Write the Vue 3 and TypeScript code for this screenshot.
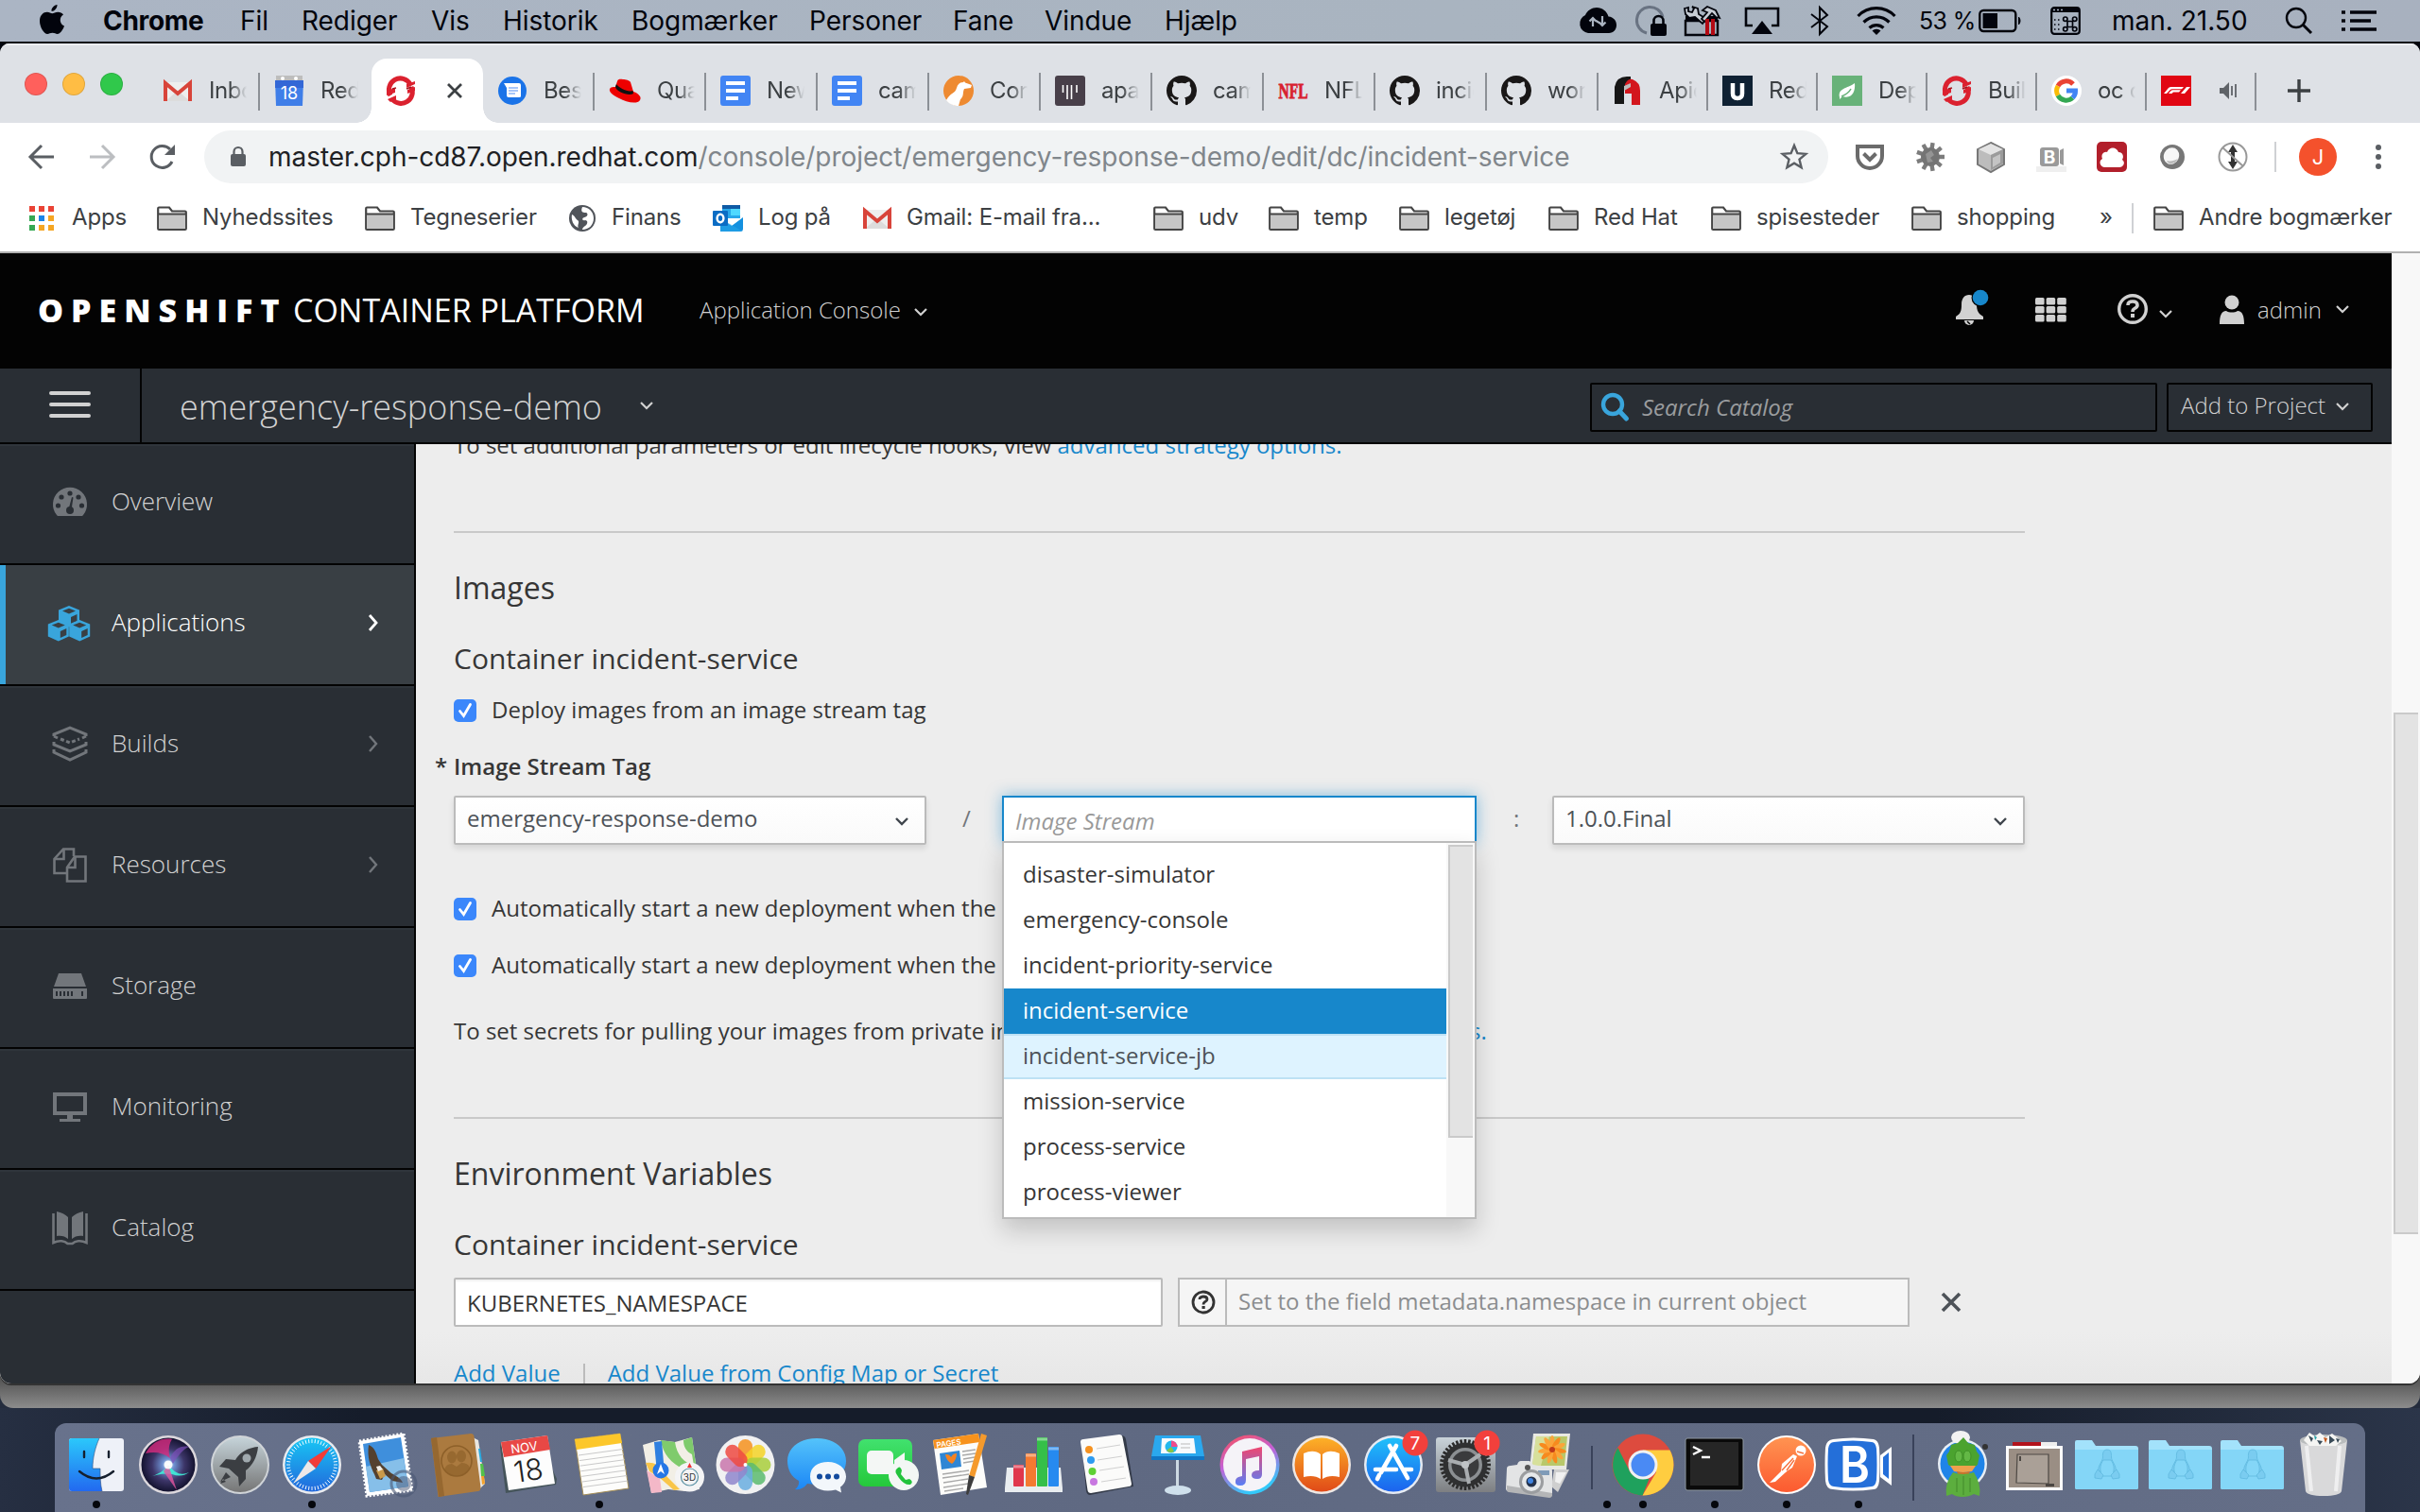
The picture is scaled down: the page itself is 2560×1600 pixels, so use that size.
<script setup lang="ts">
import { h } from 'vue'

interface Glyph { w: number; h: number; body: string }

const g = (w: number, hh: number, body: string): Glyph => ({ w, h: hh, body })

const octocat = '<path transform="scale(2)" fill="#191717" d="M8 0C3.58 0 0 3.58 0 8c0 3.54 2.29 6.53 5.47 7.59.4.07.55-.17.55-.38 0-.19-.01-.82-.01-1.49-2.01.37-2.53-.49-2.69-.94-.09-.23-.48-.94-.82-1.13-.28-.15-.68-.52-.01-.53.63-.01 1.08.58 1.23.82.72 1.21 1.87.87 2.33.66.07-.52.28-.87.51-1.07-1.78-.2-3.64-.89-3.64-3.95 0-.87.31-1.59.82-2.15-.08-.2-.36-1.02.08-2.12 0 0 .67-.21 2.2.82.64-.18 1.32-.27 2-.27s1.36.09 2 .27c1.53-1.04 2.2-.82 2.2-.82.44 1.1.16 1.92.08 2.12.51.56.82 1.27.82 2.15 0 3.07-1.87 3.75-3.65 3.95.29.25.54.73.54 1.48 0 1.07-.01 1.93-.01 2.2 0 .21.15.46.55.38A8.01 8.01 0 0 0 16 8c0-4.42-3.58-8-8-8z"/>'
const openshift = '<g fill="none" stroke="#db212f" stroke-width="5"><path d="M5 21A12 12 0 0 1 26 9"/><path d="M27 12A12 12 0 0 1 7 25"/></g><path d="M1 16l9-3v5l-9 3zM22 13l9-4v-3l-9 3zM2 25l9-4v4l-6 3zM23 19l8-3v-4l-8 3z" fill="#db212f"/><path d="M7 14l4-1M22 14l5-2" stroke="#a5161f" stroke-width="1.5"/>'
const gmail = '<rect x="3" y="7" width="26" height="20" rx="1" fill="#eee"/><path d="M3 27l13-11 13 11z" fill="#dcdcdc"/><path d="M3 27V8l13 11L29 8v19" fill="none" stroke="#d8443a" stroke-width="4"/>'
const doc = '<rect width="32" height="32" rx="3" fill="#4285f4"/><path d="M6 6h20v4H6zM6 14h20v4H6zM6 22h13v4H6z" fill="#fff"/>'
const chevDown = (c: string, s = 2.2) => `<path d="M2 2l6 6 6-6" fill="none" stroke="${c}" stroke-width="${s}"/>`
const penguin = '<g fill="#7accf0" stroke="#5fb9de" stroke-width=".8"><path d="M34 28c-4 0-5 4-4.500 8 0 4-5 8-5 15h19c0-7-5-11-5-15 0-4 0-8-4.500-8z"/><path d="M30 39c-4 5-4 12-1 17h10c3-5 3-12-1-17z" fill="#84d6f7"/><path d="M24 49l6 6-2 4-7-1v-4z"/><path d="M44 49l-6 6 2 4 7-1v-4z"/></g>'
const folderArt = (x: number) => `<g transform="translate(${x} 0)"><path d="M0 20q0-2 2-2h16l4 6h42q3 0 3 3v41q0 2-2 2H2q-2 0-2-2z" fill="#a3e2fb"/><path d="M0 28h67v40q0 2-2 2H2q-2 0-2-2z" fill="#84d6f7"/>${penguin}</g>`
const badge = (n: string) => `<circle cx="65" cy="21" r="13.500" fill="#f2403c"/><text x="65" y="28" text-anchor="middle" font-size="19" fill="#fff">${n}</text>`
const petals = ['#f6921e', '#f5d327', '#a9cf3c', '#5cbb6e', '#6aaee0', '#8f86cc', '#c977ad', '#ee4a42']
  .map((c, i) => `<rect x="33" y="17" width="15" height="27" rx="7.500" fill="${c}" opacity=".85" transform="rotate(${i * 45} 40.500 44)"/>`).join('')
const ticks = (n: number, cx: number, cy: number, r1: number, r2: number, c: string, w: number) =>
  Array.from({ length: n }, (_, i) => `<path d="M${cx} ${cy - r1}V${cy - r2}" stroke="${c}" stroke-width="${w}" transform="rotate(${(i * 360) / n} ${cx} ${cy})"/>`).join('')
const flower = Array.from({ length: 11 }, (_, i) => `<ellipse cx="58" cy="21" rx="2.600" ry="8" fill="${i % 2 ? '#f78a1e' : '#fba53a'}" transform="rotate(${(i * 360) / 11} 58 28)"/>`).join('')

const glyphs: Record<string, Glyph> = {
  // menu bar
  apple: g(28, 34, '<path d="M19.500 1c.3 3-2.600 7-6 6.800C13 4.800 16.200 1.400 19.500 1zM26 11.500c-4.800 3-4 10 1 12-1.300 3.800-4.300 8.500-7.300 8.500-2 0-2.700-1.200-5.200-1.200S11 32 9.200 32C5.500 32 1 24.500 1 18.200 1 12 5 8.800 8.800 8.800c2.300 0 4 1.400 5.500 1.400 1.400 0 3.300-1.500 6.200-1.500 2 0 4.200 1 5.500 2.800z" fill="#02040c"/>'),
  cloud: g(42, 28, '<path d="M11 27a10 10 0 0 1-3-19C10 3 15 0 20 0c6 0 11 4 12.500 9.500C38 10 41 14 41 18.500 41 23 38 27 33 27z" fill="#02040c"/><path d="M16 20v-8M12.500 14.500L16 11l3.500 3.500M26 9v9M22.500 15.500L26 19l3.500-3.500M16 12l10 6" stroke="#aab4c1" stroke-width="2.200" fill="none"/>'),
  vpn: g(36, 34, '<path d="M14 30A14 14 0 1 1 31 13" fill="none" stroke="#697382" stroke-width="3"/><rect x="18" y="20" width="17" height="13" rx="2" fill="#02040c"/><path d="M21.500 21v-4a5 5 0 0 1 10 0v4" fill="none" stroke="#02040c" stroke-width="2.600"/>'),
  toolbox: g(40, 34, '<path d="M3 17h34v15H3z" fill="#a4adb9" stroke="#02040c" stroke-width="2.400"/><path d="M3 12h34v6H3z" fill="#02040c"/><path d="M2 4l4-1v4l4 1 2-4-2-2 6 2 1 6 8 5-4 5-8-7-6 1-4-4z" fill="#c7cdd5" stroke="#02040c" stroke-width="1.800"/><path d="M21 6l5-4 9 4 4 8-4-1-4-4-8 9-3-3 6-7z" fill="#c7cdd5" stroke="#02040c" stroke-width="1.800"/><path d="M26 15v17M32 15v17" stroke="#b20912" stroke-width="4"/>'),
  airplay: g(38, 30, '<path d="M9 20H2V2h34v18h-7" fill="none" stroke="#02040c" stroke-width="2.600"/><path d="M8 29L19 15l11 14z" fill="#02040c"/>'),
  bluetooth: g(20, 32, '<path d="M1 9l17 13-8 8V2l8 8L1 23" fill="none" stroke="#02040c" stroke-width="2"/>'),
  wifi: g(42, 30, '<g fill="none" stroke="#02040c" stroke-width="3.200"><path d="M1.500 10a27 27 0 0 1 39 0"/><path d="M7.500 16.500a19 19 0 0 1 27 0"/><path d="M13.500 22.500a11 11 0 0 1 15 0"/></g><path d="M21 30l-4.500-4.500a6.500 6.500 0 0 1 9 0z" fill="#02040c"/>'),
  battery: g(46, 26, '<rect x="1.300" y="2" width="38" height="22" rx="4" fill="none" stroke="#02040c" stroke-width="2.400"/><rect x="4.500" y="5" width="15.500" height="16" fill="#02040c"/><path d="M42.500 9a6 6 0 0 1 0 8z" stroke="#02040c" fill="#02040c"/>'),
  input: g(32, 30, '<rect x="1.200" y="1.200" width="29.600" height="27.600" rx="3" fill="none" stroke="#02040c" stroke-width="2.200"/><path d="M2 2h28v4H2z" fill="#02040c"/><path d="M3 3.500h2M7 3.500h2M11 3.500h2" stroke="#aab4c1" stroke-width="1.600"/><path d="M4 14h1.500M8 14h1.500M4 19h1.500M8 19h1.500M4 24h1.500M8 24h1.500" stroke="#02040c" stroke-width="1.600"/><g fill="none" stroke="#02040c" stroke-width="1.700"><path d="M18 15.500h5.500v6H18z"/><circle cx="15.800" cy="13.200" r="2.200"/><circle cx="25.700" cy="13.200" r="2.200"/><circle cx="15.800" cy="23.800" r="2.200"/><circle cx="25.700" cy="23.800" r="2.200"/></g>'),
  spotlight: g(30, 30, '<circle cx="12" cy="12" r="10" fill="none" stroke="#02040c" stroke-width="2.400"/><path d="M19 19l9 9" stroke="#02040c" stroke-width="3"/>'),
  list: g(38, 24, '<path d="M0 3h4M9 3h28M0 12h4M9 12h22M0 21h4M9 21h28" stroke="#02040c" stroke-width="3.600"/>'),
  // favicons
  gmail: g(32, 32, gmail),
  gcal: g(32, 32, '<path d="M2 0h28v6H2z" fill="#bdbdbd"/><circle cx="9" cy="3" r="2" fill="#fff"/><circle cx="23" cy="3" r="2" fill="#fff"/><path d="M1 5h30l-1 27H2z" fill="#3f7ee8"/><path d="M1 5h30v8H1z" fill="#3367d6"/><text x="16" y="25" font-size="18" text-anchor="middle" fill="#fff">18</text>'),
  openshift: g(32, 32, openshift),
  messages: g(32, 32, '<circle cx="16" cy="16" r="15" fill="#1a73e8"/><path d="M7 8h16q2 0 2 2v12q0 1-2 1H12q-2 0-2-2V13z" fill="#fff"/><path d="M12 13h10M12 16h10M12 19h7" stroke="#8ab4f8" stroke-width="1.500"/>'),
  redhat: g(34, 32, '<path d="M9 6c1-3 4-2 6-2 3 0 7 1 8 3l3 10c6 2 9 6 7 9-3 5-15 2-22-2C4 21 0 17 1 14c1-2 4-2 6-2z" fill="#ee0000"/><path d="M7 12c1 5 14 10 19 7l-.5-3c-5 2-15-3-17.500-7z" fill="#111"/>'),
  doc: g(32, 32, doc),
  camel: g(32, 32, '<circle cx="16" cy="16" r="16" fill="#ee8a31"/><path d="M3 26C8 17 12 20 14 13c1-4 4-6 7-6l1-1 1 1.500 7 2.500-1 3-7 1c-2 4 0 8-4 11l-2 7c-5 0-10-2-13-6z" fill="#fff"/>'),
  lines: g(32, 32, '<rect width="32" height="32" rx="3" fill="#483f49"/><path d="M8.500 10v8M13 10v15M17.500 10v15M23 10v8" stroke="#fff" stroke-width="1.600"/>'),
  github: g(32, 32, octocat),
  nfl: g(32, 32, '<text x="16" y="24" font-family="Liberation Serif, serif" font-weight="700" font-size="23" text-anchor="middle" textLength="31" lengthAdjust="spacingAndGlyphs" fill="#d8202f" stroke="#d8202f" stroke-width=".8">NFL</text>'),
  api: g(32, 32, '<path d="M2 30V12Q4 1 15 1h4v8l-7 6v15z" fill="#161616"/><path d="M13 9q3-6 8-5 8 3 8 12v15h-9V19h-7z" fill="#d3161d"/><path d="M12 11l7-3v4l-7 4z" fill="#bbb"/>'),
  udacity: g(32, 32, '<rect width="32" height="32" fill="#0f2133"/><path d="M11 8v11q0 5 5 5t5-5V8" fill="none" stroke="#fff" stroke-width="4.500"/>'),
  leaf: g(32, 32, '<rect width="32" height="32" fill="#68b279"/><path d="M8 23C6 13 16 14 24 8c1 9-3 17-13 14l-3 3z" fill="#fff"/><path d="M10 22c5-2 8-4 10-8" stroke="#68b279" stroke-width="1.500" fill="none"/>'),
  google: g(32, 32, '<circle cx="16" cy="16" r="16" fill="#fff"/><g fill="none" stroke-width="5"><path d="M7 11a10 10 0 0 1 16-2" stroke="#ea4335"/><path d="M7 21a10 10 0 0 1 0-10" stroke="#fbbc05"/><path d="M22.500 23.500A10 10 0 0 1 7 21" stroke="#34a853"/><path d="M16 16h9.500a10 10 0 0 1-3 7.500" stroke="#4285f4"/></g>'),
  f1: g(32, 32, '<rect width="32" height="32" fill="#e10613"/><path d="M3 19l5-6q1-1 3-1h13l-2 2.300H12q-1.500 0-2.500 1L6 19zM8 19l2.500-3q.8-.8 2-.8H21L19 17.500h-6L11.500 19zM21 19l6-7h4l-6 7z" fill="#fff"/>'),
  speaker: g(20, 20, '<path d="M1 7h4l6-6v18l-6-6H1z" fill="#5f6368"/><path d="M14 5v10M18 3v14" stroke="#5f6368" stroke-width="1.800"/>'),
  closeTab: g(20, 20, '<path d="M3 3l14 14M17 3L3 17" stroke="#3c4043" stroke-width="2.800"/>'),
  plus: g(26, 26, '<path d="M13 1v24M1 13h24" stroke="#3c4043" stroke-width="3.400"/>'),
  // toolbar
  back: g(28, 28, '<path d="M27 14H3M14 2L2 14l12 12" fill="none" stroke="#5a5e63" stroke-width="3"/>'),
  forward: g(28, 28, '<path d="M1 14h24M14 2l12 12-12 12" fill="none" stroke="#bcbec1" stroke-width="3"/>'),
  reload: g(30, 28, '<path d="M25 19A11.500 11.500 0 1 1 23 6" fill="none" stroke="#5a5e63" stroke-width="3"/><path d="M28 1v11H17z" fill="#5a5e63"/>'),
  lock: g(18, 24, '<rect x="1" y="9" width="16" height="13" rx="2" fill="#5a5e63"/><path d="M4.500 10V6.500a4.500 4.500 0 0 1 9 0V10" fill="none" stroke="#5a5e63" stroke-width="2.200"/>'),
  star: g(30, 30, '<path d="M15 3l3.400 8.200 8.900.7-6.800 5.800 2.100 8.600L15 21.700l-7.600 4.600 2.100-8.600L2.700 11.900l8.900-.7z" fill="none" stroke="#5a5e63" stroke-width="2.400"/>'),
  pocket: g(32, 32, '<path d="M3 5h26v10a13 13 0 0 1-26 0z" fill="none" stroke="#6b6b6b" stroke-width="4"/><path d="M9.500 12.500l6.500 6.500 6.500-6.500" fill="none" stroke="#6b6b6b" stroke-width="4"/>'),
  gear: g(32, 32, '<g transform="rotate(10 16 16)">' + ticks(9, 16, 16, 8, 15, '#7c7c7c', 4.4) + '</g><circle cx="16" cy="16" r="10" fill="#747474"/><path d="M11 13l6-4 3 5-4 3 3 4-6 1z" fill="#949494"/>'),
  cube: g(32, 32, '<path d="M16 1l14 7v16l-14 8-14-8V8z" fill="#bcbcbc" stroke="#777" stroke-width="2"/><path d="M3 8l13 6 13-6-13-6z" fill="#e3e3e3"/><path d="M16 14v16l13-7V8z" fill="#9b9b9b"/><path d="M18 17l8-4v9l-8 5z" fill="#c4c4c4"/>'),
  bj: g(32, 32, '<path d="M0 26h32v6H0z" fill="#efefef"/><rect x="4" y="6" width="20" height="20" rx="3" fill="#9a9a9a"/><path d="M25 9l4-2v18l-4-2z" fill="#9a9a9a"/><text x="14" y="23" font-size="19" font-weight="700" text-anchor="middle" fill="#fff">B</text>'),
  cloudRed: g(32, 32, '<rect width="32" height="32" rx="5" fill="#b21f2b"/><path d="M8 27c-5-1-6-7-2-9-2-5 2-8 5-7 2-6 10-6 12 0 5 0 6 5 4 8 4 3 1 8-3 8z" fill="#fff"/>'),
  ring: g(32, 32, '<circle cx="16" cy="16" r="13" fill="#777"/><ellipse cx="15" cy="15" rx="8" ry="9" fill="#f7f7f7" transform="rotate(25 15 15)"/><path d="M10 20c2 5 9 4 12-2-4 2-8 3-12 2z" fill="#bbb"/>'),
  scroll: g(32, 32, '<circle cx="16" cy="16" r="14.500" fill="#fff" stroke="#999" stroke-width="2"/><path d="M16 3l5 8h-3v10h3l-5 8-5-8h3V11h-3z" fill="#333"/><path d="M5 6l22 20" stroke="#999" stroke-width="2"/>'),
  kebab: g(8, 28, '<g fill="#5a5e63"><circle cx="4" cy="4" r="3"/><circle cx="4" cy="14" r="3"/><circle cx="4" cy="24" r="3"/></g>'),
  // bookmarks
  apps: g(32, 28, [['#ea4335', '#ea4335', '#ea4335'], ['#34a853', '#1a84e8', '#f5a623'], ['#34a853', '#f5a623', '#f5a623']]
    .map((r, y) => r.map((c, x) => `<rect x="${x * 10}" y="${1 + y * 10}" width="6" height="6" fill="${c}"/>`).join('')).join('')),
  folder: g(32, 28, '<path d="M1.200 25V3.500q0-1 1-1H13l3 4h13.800q1 0 1 1V25q0 1-1 1H2.200q-1 0-1-1z" fill="#fff" stroke="#454545" stroke-width="2.200"/><path d="M2.200 9.500h27.600V25H2.200z" fill="#c6c6c6"/><path d="M1 9.500h30" stroke="#454545" stroke-width="2"/>'),
  globe: g(32, 28, '<circle cx="14" cy="14" r="14" fill="#50545a"/><path d="M14 2c-2 5 0 6 4 6 3 1 1 5-2 5-3 1-2 4 1 3 3 0 3 4 0 6-2 1-3 3-3 4C21 26 26 21 26 14S21 2 14 2zM3 10c3 1 4 5 6 6 3 2-1 5 1 8C4 22 2 15 3 10z" fill="#fff"/>'),
  outlook: g(32, 28, '<path d="M10 0h19v14H10z" fill="#28a8ea"/><path d="M10 0h19v4H10z" fill="#0f5ba5"/><path d="M19 4h10v7H19z" fill="#50d9ff"/><path d="M8 14l12 8 12-9v12q0 3-3 3H8z" fill="#1490df"/><path d="M8 14l24 14H8z" fill="#28a8ea" opacity=".5"/><rect y="6" width="16" height="16" rx="1" fill="#0a6cc4"/><ellipse cx="8" cy="14" rx="3.400" ry="4.200" fill="none" stroke="#fff" stroke-width="2.400"/>'),
  gmailSmall: g(32, 28, `<g transform="translate(-2 -2)">${gmail}</g>`),
  // console header
  chevLight: g(16, 11, chevDown('#d1d1d1')),
  chevDark: g(16, 11, chevDown('#3f454c', 2.4)),
  chevRight: g(14, 22, '<path d="M3 3l7 8-7 8" fill="none" stroke="#fff" stroke-width="2.800"/>'),
  chevRightDim: g(14, 22, '<path d="M3 3l7 8-7 8" fill="none" stroke="#72767b" stroke-width="2.400"/>'),
  bell: g(36, 40, '<path d="M14 6c5 0 8 4 8 10 0 7 2 10 7 13v3H0v-3c5-3 6-6 6-13 0-6 3-10 8-10z" fill="#d1d1d1"/><path d="M9 33a5 5 0 0 0 10 0z" fill="#d1d1d1"/><path d="M12 34l3 3" stroke="#030303" stroke-width="1.500"/><circle cx="26" cy="9" r="9.500" fill="#030303"/><circle cx="26" cy="9" r="8.300" fill="#1787cb"/>'),
  grid: g(34, 26, [0, 1, 2].map(y => [0, 1, 2].map(x => `<rect x="${x * 11.6}" y="${y * 9}" width="9.600" height="7.400" rx="1.500" fill="#d1d1d1"/>`).join('')).join('')),
  help: g(34, 34, '<circle cx="17" cy="17" r="14.300" fill="none" stroke="#d1d1d1" stroke-width="3.400"/><path d="M12 13q0-4 5-4t5 4q0 2-3 3.500-2 1-2 3.500" fill="none" stroke="#d1d1d1" stroke-width="3.600"/><rect x="15" y="22" width="4" height="4" fill="#d1d1d1"/>'),
  helpDark: g(26, 26, '<circle cx="13" cy="13" r="11" fill="none" stroke="#333" stroke-width="2.800"/><path d="M9 10q0-3 4-3t4 3q0 1.500-2.500 2.700-1.500 1-1.500 2.800" fill="none" stroke="#333" stroke-width="2.800"/><rect x="11.500" y="17" width="3.200" height="3" fill="#333"/>'),
  user: g(26, 32, '<circle cx="13" cy="8" r="7.500" fill="#d1d1d1"/><path d="M0 31c0-9 2-14 7-14 3 2 9 2 12 0 5 0 7 5 7 14z" fill="#d1d1d1"/>'),
  burger: g(44, 30, '<path d="M2 3h40M2 15h40M2 27h40" stroke="#d1d1d1" stroke-width="4" stroke-linecap="round"/>'),
  search: g(32, 32, '<circle cx="13" cy="13" r="10" fill="none" stroke="#39a5dc" stroke-width="4.400"/><path d="M20 20l7.500 8" stroke="#39a5dc" stroke-width="5" stroke-linecap="round"/>'),
  remove: g(22, 22, '<path d="M2 2l18 18M20 2L2 20" stroke="#4d5258" stroke-width="3.600"/>'),
  check: g(24, 24, '<rect width="24" height="24" rx="5" fill="#3b87fb"/><path d="M6.500 12.500l4 5 7-12" fill="none" stroke="#fff" stroke-width="2.800" stroke-linecap="round"/>'),
  // console sidebar
  gauge: g(44, 44, '<path d="M8 36A18 18 0 1 1 36 36l-1 1H9z" fill="#72767b"/><g fill="#292e34"><circle cx="22" cy="13" r="2.600"/><circle cx="13" cy="17" r="2.600"/><circle cx="31" cy="17" r="2.600"/><circle cx="9.500" cy="26" r="2.600"/><circle cx="34.500" cy="26" r="2.600"/><circle cx="22" cy="31" r="4"/><path d="M20.500 30L24 17l1.500.5-2 13z"/></g>'),
  cubes: g(44, 44, [[21, 4], [9.800, 19], [32.200, 19]].map(([x, y]) =>
    `<g transform="translate(${x} ${y})"><path d="M0 0l11 4.500v13L0 22.500l-11-5v-13z" fill="#39a5dc"/><path d="M0 2.800l7 2.800L0 8.600l-7-3zM2 12l6.500-3v7L2 19z" fill="#393f44"/></g>`).join('')),
  layers: g(44, 44, '<g fill="none" stroke="#72767b" stroke-width="3"><path d="M5 14v-2l17-7 17 7v2M5 14l4 2M39 14l-4 2"/><path d="M12 17l10 4 10-4" stroke-dasharray="4 2.500"/><path d="M5 20v3l17 7 17-7v-3"/><path d="M5 28v3l17 8 17-8v-3"/></g>'),
  copy: g(44, 44, '<g fill="none" stroke="#72767b" stroke-width="2.600"><path d="M18 31H5.500V16L15 5.500h11V13"/><path d="M15.500 6v10H6"/><path d="M27 13.500h11.500v26H19V25z"/><path d="M27.500 14v11H20"/></g>'),
  disk: g(44, 44, '<path d="M10 9h24l5 14H5z" fill="#72767b"/><path d="M4 25h36v10q0 1-1 1H5q-1 0-1-1z" fill="#72767b"/><path d="M8 28v5M12 28v5M16 28v5M20 28v5M24 28v5M35 28v5" stroke="#292e34" stroke-width="2"/>'),
  screen: g(44, 44, '<path d="M6 9h32v20H6z" fill="none" stroke="#72767b" stroke-width="4"/><path d="M19 30h6v5h8v3H11v-3h8z" fill="#72767b"/>'),
  book: g(44, 44, '<path d="M8 5c5 1 9 3 12 6v23c-3-3-8-4-12-3zM36 5c-5 1-9 3-12 6v23c3-3 8-4 12-3z" fill="#72767b"/><path d="M4.500 7v31c6-3 12-2 15 1h5c3-3 9-4 15-1V7" fill="none" stroke="#72767b" stroke-width="2.600"/>'),
  // dock
  finder: g(76, 94, '<defs><linearGradient id="fa" x2="0" y2="1"><stop stop-color="#2bc8fb"/><stop offset="1" stop-color="#2269f0"/></linearGradient></defs><rect x="9" y="16" width="58" height="56" rx="3" fill="#eef1f8"/><path d="M12 16h29c-4 9-7 20-7 32h8c0 8 0 16 2 24H12q-3 0-3-3V19q0-3 3-3z" fill="url(#fa)"/><path d="M41 16c-4 9-7 20-7 32h8c0 8 0 16 2 24" fill="none" stroke="#33507a" stroke-width="1" opacity=".6"/><path d="M25 30v6M51 30v6M20 51q18 15 36 0" fill="none" stroke="#16202e" stroke-width="2.400" stroke-linecap="round"/>'),
  siri: g(76, 94, '<defs><radialGradient id="si"><stop stop-color="#dff6ff"/><stop offset=".22" stop-color="#6d8fd0"/><stop offset=".6" stop-color="#3c3568"/><stop offset="1" stop-color="#141330"/></radialGradient></defs><circle cx="38" cy="44" r="31" fill="#dcd8dd"/><circle cx="38" cy="44" r="28.500" fill="url(#si)"/><path d="M14 32C20 20 32 15 42 17c-4 6-4 14-2 20-8-6-16-7-26-5z" fill="#d72c7f" opacity=".8"/><path d="M40 37c4-10 12-14 20-12-6 2-12 10-17 18z" fill="#7a4fb8" opacity=".7"/><path d="M16 58q18-6 22-14 10 14 22 8-8 6-18 2-12-2-26 4z" fill="#3ff0d8" opacity=".9"/><path d="M38 44l9 27-14-20z" fill="#e4559f" opacity=".8"/><circle cx="38" cy="44" r="4.500" fill="#fff" opacity=".9"/>'),
  rocket: g(76, 94, '<defs><linearGradient id="ro" x2="0" y2="1"><stop stop-color="#c5d3d9"/><stop offset="1" stop-color="#767676"/></linearGradient></defs><circle cx="38" cy="44" r="31" fill="#d0d4d8"/><circle cx="38" cy="44" r="29" fill="url(#ro)"/><path d="M57 25c-12 1-20 7-24 14l-10-1-7 8 10 2 10 9 1 10 7-8v-9c7-5 12-14 13-25z" fill="#3b3e42"/><circle cx="45" cy="37" r="4.500" fill="#a0a9ae"/><path d="M23 52l-6 10 11-5zM17 64l3-5 3 3z" fill="#3b3e42"/>'),
  safari: g(76, 94, '<defs><linearGradient id="sa" x2="0" y2="1"><stop stop-color="#18c6f4"/><stop offset="1" stop-color="#2268dc"/></linearGradient></defs><circle cx="38" cy="44" r="31" fill="#e9ebef"/><circle cx="38" cy="44" r="28.500" fill="url(#sa)"/>' + ticks(48, 38, 44, 23, 27, '#fff', 0.9) + '<path d="M59 24L34 40l8 8z" fill="#f23c38"/><path d="M18 64l16-24 8 8z" fill="#ece8e8"/>'),
  mail: g(76, 94, '<path d="M12 19l47-8 9 60-48 6z" fill="#fff" stroke="#fff" stroke-width="3" stroke-dasharray="2 2"/><path d="M16 22l40-7 8 52-41 6z" fill="#3f8fdc"/><path d="M19 46l40-9 5 30-41 6z" fill="#86bfe9"/><path d="M22 23c7 3 8 9 10 15l4 6 10 9c5 3 10 5 12 10l-11-2-8-7-3 6-6-1-2-5c-4-8-8-18-6-31z" fill="#54412f"/><path d="M30 50l7-2 3 8-6 3z" fill="#c99a4b"/><path d="M30 46l4-1 3 4-5 2z" fill="#f2efe8"/><circle cx="59" cy="64" r="13" fill="none" stroke="#4a5673" stroke-width="3" opacity=".6"/><circle cx="59" cy="64" r="8" fill="#4a5673" opacity=".5"/>'),
  contacts: g(76, 94, '<path d="M56 15l6 3 7 46-6 6z" fill="#e9e6e0"/><path d="M62 27l2 0 2 14-2 0z" fill="#27a9e0"/><path d="M64 43l3 0 2 13-4 0z" fill="#53c24b"/><path d="M65 56l3 0 1 8-3 1z" fill="#f4a12a"/><path d="M12 16l42-5q3 0 3.500 3l7 54q0 4-3 4l-42 6z" fill="#ab7a3f"/><path d="M12 16l6-1 8 62-6 1z" fill="#966830"/><circle cx="39" cy="40" r="16" fill="none" stroke="#8d6029" stroke-width="1.600"/><g fill="#8d6029" opacity=".65"><ellipse cx="34" cy="36" rx="5" ry="6.500"/><ellipse cx="44" cy="35" rx="5" ry="6.500"/><path d="M26 49q2-6 8-6l5 3 5-4q7 0 9 5-4 8-13 9-9 0-14-7z"/></g>'),
  calendar: g(76, 94, '<path d="M10 20l-1 5 6 49 53-9 1-6-9-20z" fill="#45545a"/><path d="M10 20l49-7 8 51-49 7z" fill="#fdfdfd"/><path d="M10 20l49-7 3 15-49 8z" fill="#e84845"/><g transform="rotate(-8 38 44)" text-anchor="middle"><text x="37" y="30" font-size="13" fill="#fff">NOV</text><text x="38" y="61" font-size="31" font-weight="300" fill="#222">18</text></g>'),
  notes: g(76, 94, '<path d="M12 17l48-6 9 58-48 7z" fill="#fdfdfb" stroke="#a58e56" stroke-width="1"/><path d="M12 17l48-6 2 10-48 7z" fill="#fcc72a"/>' + [0, 1, 2, 3, 4, 5, 6].map(i => `<path d="M${16 + i * 0.8} ${34 + i * 5.6}l47-6.500" stroke="#c9c9c9" stroke-width="1"/>`).join('')),
  maps: g(76, 94, '<path d="M8 23l17-5 17 2 18-5 8 55-16 2-17-2-18 4z" fill="#f2efe6"/><path d="M27 18l15 2c2 14 10 22 20 25l-2-12c-6-3-9-8-9-15l9-3 4 28-12 6c-14-6-23-17-25-31z" fill="#7fcb6c"/><path d="M11 42q12-2 16 8l20 20-6 1-16-14-10-6z" fill="#f9c549"/><path d="M12 50l14 8 2 15-11 1z" fill="#f4b8c8"/><path d="M20 20l8-1 3 34-8 0z" fill="#2f7fe0"/><circle cx="27" cy="50" r="8.500" fill="#2577e6"/><path d="M27 43l4 11-4-3-4 3z" fill="#fff"/><circle cx="57.500" cy="57" r="15.500" fill="#f4f4f5"/><circle cx="57.500" cy="57" r="9" fill="none" stroke="#5d93a5" stroke-width="1.200"/><path d="M55 47l2.500-5 2.500 5z" fill="#e33"/><text x="57.500" y="61" font-size="10" text-anchor="middle" fill="#333">3D</text>'),
  photos: g(76, 94, `<circle cx="40.500" cy="44" r="31" fill="#f1f1f2"/>${petals}<circle cx="40.500" cy="44" r="2" fill="#fff"/>`),
  imessage: g(76, 94, '<defs><linearGradient id="im" x2="0" y2="1"><stop stop-color="#54c3fb"/><stop offset="1" stop-color="#1c87f6"/></linearGradient></defs><path d="M40 16c18 0 31 10 31 24S58 65 40 65l-10-1q-5 7-13 6 5-4 4-9C13 57 9 49 9 40c0-14 13-24 31-24z" fill="url(#im)"/><path d="M52 41c11 0 19 7 19 15.500 0 5-3 9-6 11l1 6-6-3c-16 4-27-4-27-14S41 41 52 41z" fill="#f3f7fb"/><g fill="#134b9e"><circle cx="43" cy="56.500" r="3"/><circle cx="52" cy="56.500" r="3"/><circle cx="61" cy="56.500" r="3"/></g>'),
  facetime: g(76, 94, '<defs><linearGradient id="ft" x2="0" y2="1"><stop stop-color="#41e16e"/><stop offset="1" stop-color="#25c83b"/></linearGradient></defs><rect x="8" y="17" width="57" height="50" rx="7" fill="url(#ft)"/><rect x="17" y="29" width="28" height="25" rx="5" fill="#f4f7f5"/><path d="M46 39l11-8v21l-11-7z" fill="#f4f7f5"/><circle cx="56" cy="55" r="16" fill="#f3f7f4"/><path d="M49 48q3-4 5 2l-1 4 5 6 4-1q5 3 1 6-6 1-12-7t-2-10z" fill="#22c33b"/>'),
  pages: g(76, 94, '<path d="M11 18l48-7 9 57-49 8z" fill="#fcfcfa"/><path d="M11 18l48-7 1.500 9-48 7z" fill="#f7921c"/><text x="15" y="26" font-size="8" fill="#fff" transform="rotate(-8 15 26)" font-weight="600">PAGES</text><path d="M18 32l21-3 2 17-21 3z" fill="#2f86d4"/><path d="M24 33q5 0 6 3 2-4 6-4 0 7-5 11-6-3-7-10z" fill="#f58220"/><path d="M42 30l14-2M42 34l14-2M43 38l12-2M43 42l12-2M21 54l28-4M21 58l28-4M22 63l26-4M22 68l26-4M23 72l20-3" stroke="#a9a9a9" stroke-width="1.300"/><path d="M62 11l6 2-13 44-6-1z" fill="#f59a2c"/><path d="M49 55l6 2-4 11-3 8-2-1z" fill="#3c3c3c"/>'),
  numbers: g(76, 94, '<path d="M13 47h57l2 22v4H11v-4z" fill="#e9edf0"/><rect x="20" y="44" width="11" height="23" rx="1" fill="#e0374c"/><rect x="33" y="32" width="11" height="35" rx="1" fill="#f47a31"/><rect x="45" y="15" width="11" height="52" rx="1" fill="#35bf49"/><rect x="57" y="25" width="11" height="42" rx="1" fill="#268af0"/><path d="M20 46h11M33 34h11M45 17h11M57 27h11" stroke="#fff" stroke-width="3" opacity=".4"/>'),
  reminders: g(76, 94, '<path d="M16 19l42-6q4 0 5 4l8 50-46 9q-3 0-4-4z" fill="#333a48"/><path d="M18 17l38-5q3 0 3.500 3L69 64q0 3-3 3l-40 7q-3 0-3.500-3L15 20q0-3 3-3z" fill="#fbfbfa"/><path d="M32 27l25-4M33 39l26-4M35 50l26-4M37 62l26-4" stroke="#d0d0d0"/><circle cx="24" cy="28" r="4" fill="#f6921f"/><circle cx="26" cy="39" r="4" fill="#2d9bf0"/><circle cx="27.500" cy="51" r="4" fill="#5fd035"/><circle cx="29" cy="62" r="4" fill="#c877e0"/>'),
  keynote: g(76, 94, '<path d="M40 39h3v32h-3z" fill="#cdd9e2"/><ellipse cx="42" cy="71" rx="14" ry="5" fill="#cfe0ec"/><path d="M18 13h48l4 22H14z" fill="#2aa8ee"/><path d="M14 35h56v4H14z" fill="#1276c4"/><path d="M25 16h34l2 16H24z" fill="#f8fafc"/><circle cx="35" cy="25" r="6.500" fill="#22b8ee"/><path d="M35 25v-6.500a6.500 6.500 0 0 1 6.500 6.500z" fill="#f04b8a"/><path d="M35 25l-5 4a6.500 6.500 0 0 0 8 1z" fill="#8bc53f"/><path d="M45 22h10M45 26h10" stroke="#bbb"/>'),
  itunes: g(76, 94, '<defs><linearGradient id="it" x1="0" y1="0" x2=".4" y2="1"><stop stop-color="#fb4f54"/><stop offset=".5" stop-color="#c361d8"/><stop offset="1" stop-color="#33c9fa"/></linearGradient><linearGradient id="nt" x2="0" y2="1"><stop stop-color="#f0466f"/><stop offset="1" stop-color="#5a7df5"/></linearGradient></defs><circle cx="42" cy="44" r="31.500" fill="url(#it)"/><circle cx="42" cy="44" r="28" fill="#f5f3f8"/><path d="M34 30l21-5v29q0 5-5 5-6 0-6-4 0-5 8-5V35l-14 3v22q0 6-6 6t-5-5q0-4 7-5z" fill="url(#nt)"/>'),
  ibooks: g(76, 94, '<defs><linearGradient id="ib" x2="0" y2="1"><stop stop-color="#fdb127"/><stop offset="1" stop-color="#e04a18"/></linearGradient></defs><circle cx="42" cy="44" r="31" fill="#eee8e4"/><circle cx="42" cy="44" r="28.500" fill="url(#ib)"/><path d="M23 32q11-5 18 1v26q-7-5-18-2zM61 32q-11-5-18 1v26q7-5 18-2z" fill="#fff"/>'),
  appstore: g(76, 94, '<defs><linearGradient id="as" x2="0" y2="1"><stop stop-color="#1fc0fa"/><stop offset="1" stop-color="#1c63ee"/></linearGradient></defs><circle cx="42" cy="44" r="31" fill="#e6ebf3"/><circle cx="42" cy="44" r="28.500" fill="url(#as)"/><path d="M38 24l19 34M45 24L29 52M23 49h22M52 49h9M27 55l-2 4" stroke="#fff" stroke-width="4.600" stroke-linecap="round"/>' + badge('7')),
  prefs: g(76, 94, '<defs><linearGradient id="pr" x2="0" y2="1"><stop stop-color="#c9d3da"/><stop offset="1" stop-color="#7d7f82"/></linearGradient></defs><rect x="11" y="15" width="63" height="58" rx="3" fill="url(#pr)"/>' + ticks(36, 42, 44, 22, 27, '#2b2b2b', 2.6) + '<circle cx="42" cy="44" r="23.500" fill="#2f3031"/><circle cx="42" cy="44" r="18" fill="#8b8f92"/><circle cx="42" cy="44" r="14.500" fill="#3a3b3d"/><path d="M42 44L24 39M42 44l16-11M42 44l4 20" stroke="#a9adb0" stroke-width="4"/><circle cx="42" cy="44" r="4" fill="#c0c4c7"/>' + badge('1')),
  capture: g(76, 94, `<path d="M38 11h39l-4 38H34z" fill="#e9e9e2"/><path d="M41 14h33l-3 31H37z" fill="#b9c86a"/><path d="M41 14h14l-9 31h-9z" fill="#dfe6a8" opacity=".8"/>${flower}<circle cx="58" cy="28" r="3" fill="#c13a1a"/><path d="M60 49h16L64 73l-7-6z" fill="#cfcfcf"/><path d="M62 52h11l-7 12-5-2z" fill="#f1f1f1"/><path d="M10 48q0-3 4-3l7-1q1-4 4-4h9l4 4 17 3q3 0 3 4v23q0 4-3 4l-43-6q-3 0-3-3z" fill="#e3e4e5"/><path d="M10 66l48 8v3q-1 2-3 2L12 73q-2 0-2-3z" fill="#b4b5b7"/><rect x="43" y="50" width="12" height="5" fill="#7f9bb8"/><circle cx="36" cy="62" r="13" fill="#9b9da0"/><circle cx="36" cy="62" r="10" fill="#e6e8ea"/><circle cx="36" cy="62" r="5.500" fill="#23324d"/><circle cx="35" cy="61" r="3" fill="#3f83e0"/><circle cx="32" cy="47" r="3" fill="#555"/>`),
  // an icon that has not finished growing into the dock
  growing: g(0, 94, '<path d="M-3 44l5-2v4z" fill="#2b9be0"/>'),
  chrome: g(76, 94, '<circle cx="38" cy="44" r="32.500" fill="#dd4b3e"/><path d="M38 28.500h28.500a32.500 32.500 0 0 1-29 48L52 52z" fill="#ffcd40"/><path d="M11.500 26l13 26q6 8 20 7l-7 17.500A32.500 32.500 0 0 1 11.500 26z" fill="#1fa15d"/><circle cx="38" cy="44" r="15.500" fill="#f1f1f1"/><circle cx="38" cy="44" r="12.500" fill="#4a8af4"/>'),
  terminal: g(76, 94, '<rect x="7" y="16" width="61" height="55" rx="2" fill="#0a0a0a" stroke="#8d97a0" stroke-width="1"/><rect x="12" y="20" width="51" height="46" fill="#262626"/><path d="M15 25l8 4-8 4M24 36h9" fill="none" stroke="#fff" stroke-width="2.400"/>'),
  postman: g(76, 94, '<defs><linearGradient id="pm" x2="0" y2="1"><stop stop-color="#ff9351"/><stop offset="1" stop-color="#fc5a30"/></linearGradient></defs><circle cx="38" cy="44" r="31" fill="#fff"/><circle cx="38" cy="44" r="29" fill="url(#pm)"/><circle cx="53" cy="29" r="5.500" fill="#fff"/><path d="M33 43l12-10 4 2-5 12-9 6-3-2z" fill="#fff"/><path d="M34 49L20 63l6-1 12-11z" fill="#fff"/><path d="M33 50l12-13M38 50l8-11M49 30l7 2" stroke="#f7713d" stroke-width="1.400"/>'),
  bluejeans: g(76, 94, '<path d="M3 26q1-8 8-9 22-3 43 0 5 1 6 9 1 18 0 35-1 9-6 9-22 3-43 0-7 0-8-9-1-18 0-35z" fill="#fff"/><path d="M6 27q1-7 6-7 20-3 40 0 4 0 5 7 1 17 0 33-1 7-5 7-20 3-40 0-5 0-6-7-1-17 0-33z" fill="#246fd9"/><path d="M61 34l12-9v41l-12-9z" fill="#fff"/><path d="M64 36l6-5v28l-6-5z" fill="#246fd9"/><text x="34" y="63" font-size="53" font-weight="600" text-anchor="middle" textLength="32" lengthAdjust="spacingAndGlyphs" fill="#fff">B</text>'),
  duck: g(76, 94, '<circle cx="62" cy="25" r="3" fill="#333"/><circle cx="38" cy="43" r="26" fill="#e8eef5"/><circle cx="38" cy="43" r="23.500" fill="#1f84e8"/><ellipse cx="36" cy="15" rx="10" ry="7" fill="#f2f2f2"/><path d="M39 15l5 6 7 2 2 7 3 4-2 10-5 4H29l-6-4-2-10 3-4 2-7 7-2z" fill="#4ba32f"/><g fill="#63b845" stroke="#3f8f28" stroke-width="1"><ellipse cx="34" cy="35" rx="4" ry="6"/><ellipse cx="43" cy="35" rx="4" ry="6"/></g><path d="M25 45h27l-4 6q-10 2-19 0z" fill="#efa14c"/><path d="M32 51q7 2 14 0l-1 3H33z" fill="#c9732c"/><path d="M28 52q10 4 22 0 8 12 6 25l-6-2q-5 3-12 3t-11-3l-6 2q-2-14 7-25z" fill="#5cae3e"/><path d="M39 56v20M32 58v15M46 58v15" stroke="#4b9632" stroke-width="1.500"/>'),
  picture: g(76, 94, '<path d="M15 20h30v5H15z" fill="#b2131c"/><path d="M45 20h17v5H45z" fill="#eee"/><rect x="8" y="24" width="60" height="47" fill="#fbfbfb"/><rect x="11" y="27" width="54" height="41" fill="#9a8e84"/><path d="M20 33h33v31l-34-1z" fill="#aaa097" stroke="#4e4944" stroke-width="1.200"/><path d="M22 35h2v5h-2zM50 64h9v3h-9z" fill="#4b4642"/>'),
  folderA: g(76, 94, folderArt(5)),
  folderB: g(76, 94, folderArt(7)),
  trash: g(76, 94, '<path d="M15 18q24 8 50 0l-6 54q-2 5-19 5t-19-5z" fill="#d9d9da"/><path d="M22 24l5 48M57 24l-4 48" stroke="#fff" stroke-width="4" opacity=".6"/><ellipse cx="40" cy="18" rx="25" ry="6" fill="#b9bcbd"/><path d="M19 18l6-8 6 4 5-4 6 5 7-4 10 8-6 5-28 0z" fill="#f5f5f3"/><path d="M24 13l5 3-2 4zM46 13l6 5-6 4zM33 18l6 1-3 4zM53 16l4 1-2 4z" fill="#3a4b58"/><path d="M40 15l4 1-2 5z" fill="#c2571d"/><path d="M30 13l3 2-2 3z" fill="#26a1a8"/>'),
}

const Icon = (p: { name: string }) => {
  const i = glyphs[p.name]
  return h('svg', { width: i.w, height: i.h, viewBox: `0 0 ${i.w || 1} ${i.h}`, innerHTML: i.body })
}
Icon.props = ['name']

// w: distance from this entry's left edge to the next one
const menus = [
  { t: 'Chrome', w: 145 }, { t: 'Fil', w: 65 }, { t: 'Rediger', w: 137 }, { t: 'Vis', w: 76 },
  { t: 'Historik', w: 136 }, { t: 'Bogmærker', w: 188 }, { t: 'Personer', w: 152 },
  { t: 'Fane', w: 97 }, { t: 'Vindue', w: 127 }, { t: 'Hjælp', w: 437 },
]
const extras = [
  { icon: 'cloud', w: 59 }, { icon: 'vpn', w: 52 }, { icon: 'toolbox', w: 65 }, { icon: 'airplay', w: 70 },
  { icon: 'bluetooth', w: 49 }, { icon: 'wifi', w: 64 }, { text: '53 %', w: 65, small: true },
  { icon: 'battery', w: 76 }, { icon: 'input', w: 65 }, { text: 'man. 21.50', w: 183 },
  { icon: 'spotlight', w: 60 }, { icon: 'list', w: 40 },
]
const tabs = [
  { icon: 'gmail', t: 'Inbox', line: true }, { icon: 'gcal', t: 'Red' }, { icon: 'openshift', active: true },
  { icon: 'messages', t: 'Besk', line: true }, { icon: 'redhat', t: 'Quay', line: true }, { icon: 'doc', t: 'New', line: true },
  { icon: 'doc', t: 'cam', line: true }, { icon: 'camel', t: 'Con', line: true }, { icon: 'lines', t: 'apac', line: true },
  { icon: 'github', t: 'cam', line: true }, { icon: 'nfl', t: 'NFL', line: true }, { icon: 'github', t: 'incid', line: true },
  { icon: 'github', t: 'work', line: true }, { icon: 'api', t: 'Apic', line: true, n: true }, { icon: 'udacity', t: 'Red', line: true, n: true },
  { icon: 'leaf', t: 'Dep', line: true, n: true }, { icon: 'openshift', t: 'Buil', line: true, n: true },
  { icon: 'google', t: 'oc c', line: true, n: true }, { icon: 'f1', sound: true, line: true, n: true },
]
const extensions = ['pocket', 'gear', 'cube', 'bj', 'cloudRed', 'ring', 'scroll']
const bookmarks = [
  { icon: 'apps', t: 'Apps', w: 135, near: true }, { icon: 'folder', t: 'Nyhedssites', w: 220 }, { icon: 'folder', t: 'Tegneserier', w: 216 },
  { icon: 'globe', t: 'Finans', w: 152, near: true }, { icon: 'outlook', t: 'Log på', w: 160 }, { icon: 'gmailSmall', t: 'Gmail: E-mail fra...', w: 306, near: true },
  { icon: 'folder', t: 'udv', w: 122 }, { icon: 'folder', t: 'temp', w: 138 }, { icon: 'folder', t: 'legetøj', w: 158 },
  { icon: 'folder', t: 'Red Hat', w: 172 }, { icon: 'folder', t: 'spisesteder', w: 212 }, { icon: 'folder', t: 'shopping', w: 199 },
]
const nav = [
  { icon: 'gauge', t: 'Overview' }, { icon: 'cubes', t: 'Applications', active: true, sub: true }, { icon: 'layers', t: 'Builds', sub: true },
  { icon: 'copy', t: 'Resources', sub: true }, { icon: 'disk', t: 'Storage' }, { icon: 'screen', t: 'Monitoring' }, { icon: 'book', t: 'Catalog' },
]
const streams = ['disaster-simulator', 'emergency-console', 'incident-priority-service', 'incident-service',
  'incident-service-jb', 'mission-service', 'process-service', 'process-viewer']
const dock = [
  ['finder', 'siri', 'rocket', 'safari', 'mail', 'contacts', 'calendar', 'notes', 'maps', 'photos', 'imessage', 'facetime',
    'pages', 'numbers', 'reminders', 'keynote', 'itunes', 'ibooks', 'appstore', 'prefs', 'capture'],
  ['growing', 'chrome', 'terminal', 'postman', 'bluejeans'],
  ['duck', 'picture', 'folderA', 'folderB', 'folderB', 'trash'],
]
const running = ['finder', 'safari', 'notes', 'growing', 'chrome', 'terminal', 'postman', 'bluejeans']
</script>

<template>
  <div class="desktop">
    <header class="menubar">
      <Icon name="apple" class="apple" />
      <span v-for="m in menus" :key="m.t" class="menu" :style="{ width: m.w + 'px' }">{{ m.t }}</span>
      <span v-for="(e, i) in extras" :key="i" class="extra" :class="{ small: e.small }" :style="{ width: e.w + 'px' }">
        <Icon v-if="e.icon" :name="e.icon" /><template v-else>{{ e.text }}</template>
      </span>
    </header>

    <div class="stage">
      <div class="window">
        <div class="tabstrip">
          <div class="lights"><i class="red" /><i class="yellow" /><i class="green" /></div>
          <div v-for="(t, i) in tabs" :key="i" class="tab" :class="{ active: t.active, line: t.line, narrow: t.n }">
            <Icon :name="t.icon" class="fav" />
            <Icon v-if="t.active" name="closeTab" class="close" />
            <Icon v-else-if="t.sound" name="speaker" class="sound" />
            <span v-else class="title">{{ t.t }}</span>
          </div>
          <Icon name="plus" class="newtab" />
        </div>
        <div class="toolbar">
          <Icon name="back" /><Icon name="forward" class="fwd" /><Icon name="reload" class="reload" />
          <div class="omnibox">
            <Icon name="lock" />
            <span class="url"><b>master.cph-cd87.open.redhat.com</b>/console/project/emergency-response-demo/edit/dc/incident-service</span>
            <Icon name="star" class="star" />
          </div>
          <div class="exts"><Icon v-for="e in extensions" :key="e" :name="e" /></div>
          <i class="bar" />
          <span class="avatar">J</span>
          <Icon name="kebab" class="kebab" />
        </div>
        <div class="bookmarks">
          <span v-for="b in bookmarks" :key="b.t" class="bm" :class="{ near: b.near }" :style="{ width: b.w + 'px' }"><Icon :name="b.icon" /><span>{{ b.t }}</span></span>
          <span class="more">»</span>
          <i class="bar" />
          <span class="bm other"><Icon name="folder" /><span>Andre bogmærker</span></span>
        </div>

        <div class="page">
          <div class="console">
            <div class="masthead">
              <span class="brand"><b>OPENSHIFT</b><span>CONTAINER PLATFORM</span></span>
              <span class="switch">Application Console</span><Icon name="chevLight" class="switch-chev" />
              <div class="tools">
                <Icon name="bell" class="bell" />
                <Icon name="grid" class="grid" />
                <Icon name="help" class="help" /><Icon name="chevLight" class="help-chev" />
                <Icon name="user" class="user" /><span class="admin">admin</span><Icon name="chevLight" />
              </div>
            </div>
            <div class="projectbar">
              <div class="toggle"><Icon name="burger" /></div>
              <span class="project">emergency-response-demo</span><Icon name="chevLight" />
              <div class="catalog"><Icon name="search" /><span>Search Catalog</span></div>
              <div class="add"><span>Add to Project</span><Icon name="chevLight" /></div>
            </div>
            <div class="body">
              <nav class="side">
                <div v-for="n in nav" :key="n.t" class="item" :class="{ on: n.active }">
                  <Icon :name="n.icon" /><span>{{ n.t }}</span>
                  <Icon v-if="n.sub" :name="n.active ? 'chevRight' : 'chevRightDim'" class="sub" />
                </div>
              </nav>
              <main class="content">
                <p class="lead">To set additional parameters or edit lifecycle hooks, view <a>advanced strategy options.</a></p>
                <hr>
                <h2>Images</h2>
                <h3>Container incident-service</h3>
                <div class="chk c1"><Icon name="check" />Deploy images from an image stream tag</div>
                <div class="label"><span class="req">*</span>Image Stream Tag</div>
                <div class="picker">
                  <div class="select"><span>emergency-response-demo</span><Icon name="chevDark" /></div>
                  <span class="sep">/</span>
                  <div class="combo">
                    <div class="field">Image Stream</div>
                    <div class="drop">
                      <ul>
                        <li v-for="s in streams" :key="s" :class="{ sel: s === 'incident-service', hov: s === 'incident-service-jb' }">{{ s }}</li>
                      </ul>
                      <div class="track"><div class="thumb" /></div>
                    </div>
                  </div>
                  <span class="sep colon">:</span>
                  <div class="select"><span>1.0.0.Final</span><Icon name="chevDark" /></div>
                </div>
                <div class="chk c2"><Icon name="check" />Automatically start a new deployment when the image changes</div>
                <div class="chk c3"><Icon name="check" />Automatically start a new deployment when the configuration changes</div>
                <p class="secrets">To set secrets for pulling your images from private image registries, view <a>advanced image options.</a></p>
                <hr>
                <h2>Environment Variables</h2>
                <h3>Container incident-service</h3>
                <div class="env">
                  <div class="name">KUBERNETES_NAMESPACE</div>
                  <div class="addon"><Icon name="helpDark" /></div>
                  <div class="value">Set to the field metadata.namespace in current object</div>
                  <Icon name="remove" class="remove" />
                </div>
                <div class="links"><a>Add Value</a><i /><a>Add Value from Config Map or Secret</a></div>
              </main>
            </div>
          </div>
          <div class="scroll"><div class="thumb" /></div>
        </div>
      </div>
    </div>

    <div class="dock">
      <div v-for="(group, gi) in dock" :key="gi" class="group">
        <div v-for="(d, i) in group" :key="i" class="app" :class="d"><Icon :name="d" /><i v-if="running.includes(d)" /></div>
      </div>
    </div>
  </div>
</template>

<style>
body { margin: 0; overflow: hidden; }
</style>

<style scoped>
* { box-sizing: border-box; }
svg { display: block; flex: none; overflow: visible; }
.desktop { width: 2560px; height: 1600px; overflow: hidden; display: flex; flex-direction: column; background: linear-gradient(90deg, #262f42, #151c2a 15%, #151c2a 80%, #2b3549); font-family: Inter, "Open Sans", sans-serif; }
.menubar { height: 44px; flex: none; display: flex; align-items: center; padding-left: 41px; background: linear-gradient(90deg, #abb5c4, #a9b4c0 60%, #a8b1bf); color: #02040c; font-size: 28px; line-height: 44px; white-space: nowrap; }
.apple { margin-right: 40px; margin-top: -3px; }
.menu { flex: none; letter-spacing: -.05px; }
.menu:nth-of-type(1) { font-weight: 700; letter-spacing: -.3px; }
.extra { flex: none; display: flex; }
.extra.small { font-size: 25px; letter-spacing: -.6px; padding-left: 2px; }

.stage { height: 1446px; flex: none; padding-top: 2px; background: linear-gradient(#02050e 1000px, #242c3d 1400px); position: relative; }
.stage::before { content: ""; position: absolute; left: 0; right: 0; top: 1380px; height: 66px; border-radius: 0 0 14px 14px; background: linear-gradient(#555 35px, #606060 42px, #8c8c8c); }
.window { height: 1418px; display: flex; flex-direction: column; border-radius: 10px 10px 12px 12px; overflow: hidden; background: #fff; position: relative; z-index: 1; box-shadow: 0 2px 0 #333; }

.tabstrip { height: 84px; flex: none; background: #dee1e6; display: flex; border-top: 2px solid #eceef1; }
.lights { width: 157px; padding: 29px 0 0 26px; display: flex; gap: 16px; }
.lights i { width: 24px; height: 24px; border-radius: 50%; border: 1px solid rgba(0, 0, 0, .12); }
.red { background: #ff605c; }
.yellow { background: #ffbd44; }
.green { background: #30c84b; }
.tab { width: 118px; height: 82px; padding: 32px 0 0 15px; display: flex; position: relative; }
.tab.narrow { width: 116px; }
.tab.line::after { content: ""; position: absolute; right: 0; top: 29px; width: 2px; height: 40px; background: #8c9096; }
.tab.active { height: 68px; margin-top: 14px; padding-top: 18px; background: #fff; border-radius: 16px 16px 0 0; }
.tab.active::before, .tab.active::after { content: ""; position: absolute; bottom: 0; width: 16px; height: 16px; }
.tab.active::before { left: -16px; background: radial-gradient(circle at 0 0, transparent 15.5px, #fff 16px); }
.tab.active::after { right: -16px; background: radial-gradient(circle at 100% 0, transparent 15.5px, #fff 16px); }
.title { margin-left: 17px; width: 40px; height: 32px; line-height: 32px; overflow: hidden; white-space: nowrap; font-size: 24px; letter-spacing: -.4px; color: #3c4043; -webkit-mask-image: linear-gradient(90deg, #000 55%, transparent); mask-image: linear-gradient(90deg, #000 55%, transparent); }
.close { margin: 6px 0 0 31px; }
.sound { margin: 6px 0 0 29px; }
.newtab { margin: 35px 0 0 32px; }

.toolbar { height: 72px; flex: none; display: flex; align-items: center; padding-left: 30px; }
.fwd { margin-left: 36px; }
.reload { margin-left: 35px; }
.omnibox { margin-left: 29px; width: 1718px; height: 56px; border-radius: 28px; background: #f1f3f4; display: flex; align-items: center; padding-left: 27px; }
.url { margin-left: 23px; font-size: 28px; letter-spacing: -.04px; color: #80868b; white-space: nowrap; width: 1599px; }
.url b { font-weight: 400; color: #202124; }
.exts { display: flex; gap: 32px; margin-left: 28px; }
.bar { width: 2px; height: 32px; background: #cfd1d4; }
.toolbar .bar { margin-left: 28px; }
.avatar { margin-left: 24px; width: 40px; height: 40px; border-radius: 50%; background: #f4512c; color: #fff; text-align: center; line-height: 40px; font-size: 22px; }
.kebab { margin-left: 40px; }
.bookmarks { height: 66px; flex: none; display: flex; align-items: center; padding: 0 0 6px 31px; border-bottom: 2px solid #b0b0b0; font-size: 24px; color: #3c4043; white-space: nowrap; letter-spacing: -.15px; }
.bm { flex: none; display: flex; align-items: center; gap: 16px; }
.bm span, .more { padding-bottom: 3px; }
.bm.near { gap: 13px; }
.more { width: 34px; }
.bookmarks .bar { margin-right: 21px; }

.page { flex: 1; display: flex; min-height: 0; font-family: "Open Sans", sans-serif; }
.scroll { width: 30px; background: #f8f8f8; padding: 486px 2px 0; }
.scroll .thumb, .track .thumb { background: #e3e3e3; border: 2px solid #cacaca; border-right: 0; }
.scroll .thumb { height: 552px; }
.console { width: 2530px; display: flex; flex-direction: column; background: #ededed; }
.masthead { height: 122px; flex: none; background: #030303; display: flex; align-items: center; color: #d1d1d1; padding-left: 40px; padding-bottom: 3px; }
.brand { width: 700px; display: flex; align-items: center; color: #fff; font-size: 34px; white-space: nowrap; }
.brand b { font-weight: 800; letter-spacing: 8px; width: 270px; }
.switch { font-size: 24px; font-weight: 300; width: 226px; white-space: nowrap; }
.switch-chev { margin-top: 5px; }
.tools { margin-left: auto; margin-right: 44px; display: flex; align-items: center; font-size: 24px; font-weight: 300; }
.bell { margin-right: 48px; margin-top: -4px; }
.grid { margin-right: 52px; }
.help { margin-right: 10px; margin-top: -2px; }
.help-chev { margin-right: 49px; margin-top: 10px; }
.user { margin-right: 14px; }
.admin { width: 68px; margin-right: 14px; }
.projectbar { height: 80px; flex: none; background: #292e34; border-bottom: 2px solid #030303; display: flex; align-items: center; color: #d1d1d1; }
.toggle { width: 150px; height: 78px; border-right: 2px solid #030303; padding: 23px 0 0 52px; }
.project { margin-left: 40px; width: 486px; padding-top: 2px; font-size: 36px; font-weight: 300; white-space: nowrap; }
.catalog, .add { height: 52px; border: 2px solid #030303; border-radius: 2px; display: flex; align-items: center; margin-top: 3px; font-size: 24px; white-space: nowrap; }
.catalog { margin-left: auto; width: 600px; padding-left: 9px; gap: 12px; color: #9a9c9e; font-style: italic; }
.add { margin-left: 10px; margin-right: 20px; width: 218px; padding-left: 13px; font-weight: 300; }
.add span { width: 163px; padding-bottom: 4px; }
.body { flex: 1; min-height: 0; display: flex; }
.side { width: 440px; flex: none; background: #292e34; border-right: 2px solid #030303; }
.item { height: 128px; border-bottom: 2px solid #030303; box-shadow: inset 0 2px 0 #2f353b; display: flex; align-items: center; padding: 0 36px 4px 52px; font-size: 26px; color: #d1d1d1; font-weight: 300; }
.item span { margin-left: 22px; padding-bottom: 3px; }
.item.on { background: #393f44; box-shadow: inset 6px 0 0 #39a5dc; color: #fff; }
.sub { margin-left: auto; }
.content { flex: 1; overflow: hidden; padding: 0 388px 0 40px; font-size: 24px; line-height: 40px; color: #363636; white-space: nowrap; background: linear-gradient(#ededed 940px, #e7e7e7); }
.content > * { margin: 0; }
.content a { color: #1787cb; }
.content .lead { margin-top: -19px; }
.content hr { border: 0; height: 2px; background: #c9c9c9; margin-top: 71px; }
.content h2 { font-size: 32px; font-weight: 400; margin-top: 38px; line-height: 40px; }
.content h3 { font-size: 30px; font-weight: 400; margin-top: 35px; line-height: 40px; }
.chk { height: 24px; line-height: 22px; display: flex; gap: 16px; }
.content .c1 { margin-top: 23px; }
.content .c2 { margin-top: 56px; }
.content .c3 { margin-top: 36px; }
.content .label { margin-top: 27px; font-weight: 600; position: relative; }
.req { position: absolute; left: -20px; top: 0; }
.content .picker { margin-top: 11px; height: 52px; display: flex; }
.select { width: 500px; height: 52px; flex: none; border: 2px solid #bbb; border-radius: 2px; background: linear-gradient(#fff, #fafafa); box-shadow: 0 4px 6px rgba(0, 0, 0, .1); padding: 0 16px 0 12px; display: flex; justify-content: space-between; align-items: center; color: #4d5258; }
.select span { padding-bottom: 4px; }
.select svg { margin-top: 3px; }
.sep { width: 80px; padding-left: 38px; line-height: 47px; color: #72767b; }
.colon { padding-left: 39px; }
.combo { width: 502px; height: 52px; position: relative; }
.field { height: 50px; border: 2px solid #1787cb; background: #fff; box-shadow: 0 0 16px rgba(23, 135, 203, .5); color: #999; font-style: italic; line-height: 50px; padding-left: 12px; }
.drop { position: absolute; left: 0; top: 48px; width: 502px; height: 400px; border: 2px solid #bbb; background: #fff; box-shadow: 0 12px 24px rgba(0, 0, 0, .18); display: flex; z-index: 2; }
.drop ul { list-style: none; margin: 0; padding: 10px 0 0; width: 468px; }
.drop li { height: 48px; line-height: 46px; padding-left: 20px; color: #363636; }
.drop li.sel { background: #1787cb; color: #fff; }
.drop li.hov { background: #def3ff; border: solid #bee1f4; border-width: 2px 0; line-height: 42px; color: #4d5258; }
.track { width: 30px; background: #f8f8f8; padding: 2px 2px 0; }
.track .thumb { height: 310px; }
.content .secrets { margin-top: 37px; }
.content .env { margin-top: 15px; height: 52px; display: flex; line-height: 48px; }
.name { width: 750px; border: 2px solid #bbb; border-radius: 2px; background: #fff; padding-left: 12px; margin-right: 16px; box-shadow: inset 0 2px 2px rgba(0, 0, 0, .06); line-height: 49px; }
.addon { width: 50px; border: 2px solid #bbb; border-right: 0; background: #f5f5f5; display: flex; align-items: center; justify-content: center; padding-left: 2px; }
.value { width: 724px; border: 2px solid #bbb; background: #f5f5f5; color: #8b8d8f; padding-left: 12px; line-height: 45px; }
.remove { margin: 15px 0 0 33px; }
.content .links { margin-top: 29px; display: flex; }
.links i { width: 2px; height: 30px; margin: 10px 24px 0 24px; background: #bbb; }

.dock { margin: 16px 58px 0; height: 94px; flex: none; border-radius: 12px 12px 0 0; background: linear-gradient(90deg, #68728c, #5f6982 45%, #646e87); display: flex; padding-left: 6px; }
.group { display: flex; }
.group + .group { position: relative; }
.group:nth-child(2) { margin-left: 40px; }
.group:nth-child(3) { margin-left: 34px; }
.group + .group::before { content: ""; position: absolute; background: #39425a; width: 2px; left: -17px; top: 24px; height: 46px; }
.group:nth-child(3)::before { top: 12px; height: 70px; left: -15px; }
.app { width: 76px; height: 94px; position: relative; }
.app i { position: absolute; left: 34px; top: 82px; width: 8px; height: 8px; border-radius: 50%; background: #05070c; }
.app.growing { width: 0; }
.app.growing i { left: -4px; }
</style>
